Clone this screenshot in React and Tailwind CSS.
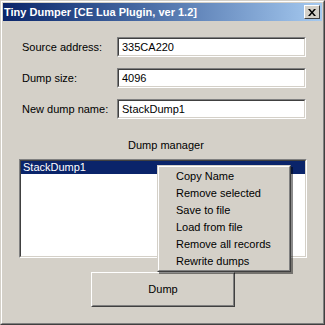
import React from 'react';

const font = { fontFamily: '"Liberation Sans", Arial, sans-serif' };

const Field = ({ label, value }) => (
  <div className="flex items-center h-5">
    <div className="w-[114px] pl-[19px] text-[11px] text-black whitespace-nowrap">{label}</div>
    <div className="w-[189px] h-5 bg-white border-t border-l border-[#808080] border-b border-r border-b-white border-r-white">
      <div className="h-full border-t border-l border-[#404040] border-b border-r border-b-[#d4d0c8] border-r-[#d4d0c8] pl-[3px] text-[11px] leading-[16px] text-black">
        {value}
      </div>
    </div>
  </div>
);

const menuItems = [
  'Copy Name',
  'Remove selected',
  'Save to file',
  'Load from file',
  'Remove all records',
  'Rewrite dumps',
];

export default function App() {
  return (
    <div className="w-[325px] h-[325px] bg-[#d4d0c8]" style={font}>
      <div className="w-[325px] h-[325px] border border-t-[#d4d0c8] border-l-[#d4d0c8] border-b-[#404040] border-r-[#404040]">
        <div className="h-full border border-t-white border-l-white border-b-[#808080] border-r-[#808080] p-px flex flex-col">
          {/* title bar */}
          <div className="h-[18px] flex items-center justify-between bg-gradient-to-r from-[#0a246a] to-[#a6caf0] pl-[1px] pr-[2px]">
            <span className="text-white font-bold text-[11px]">Tiny Dumper [CE Lua Plugin, ver 1.2]</span>
            <div className="w-4 h-[14px] bg-[#d4d0c8] border border-t-white border-l-white border-b-[#404040] border-r-[#404040] flex items-center justify-center">
              <svg width="8" height="7" viewBox="0 0 8 7">
                <path d="M0 0h2l2 2.5L6 0h2L5 3.5 8 7H6L4 4.5 2 7H0l3-3.5z" fill="black" />
              </svg>
            </div>
          </div>

          {/* body */}
          <div className="relative flex-1 flex flex-col pt-[16px]">
            <div className="flex flex-col gap-[11px]">
              <Field label="Source address:" value="335CA220" />
              <Field label="Dump size:" value="4096" />
              <Field label="New dump name:" value="StackDump1" />
            </div>

            <div className="mt-[20px] pl-[125px] text-[11px] text-black leading-[13px]">Dump manager</div>

            <div className="mt-[7px] ml-[16px] w-[288px] h-[99px] bg-white border border-t-[#808080] border-l-[#808080] border-b-white border-r-white">
              <div className="h-full border border-t-[#404040] border-l-[#404040] border-b-[#d4d0c8] border-r-[#d4d0c8]">
                <div className="h-[13px] bg-[#0a246a] text-white text-[11px] leading-[13px] pl-[2px]">StackDump1</div>
              </div>
            </div>

            <div className="mt-[14px] ml-[88px] w-[144px] h-[35px] border border-t-white border-l-white border-b-[#404040] border-r-[#404040]">
              <div className="h-full flex items-center justify-center border border-t-[#d4d0c8] border-l-[#d4d0c8] border-b-[#808080] border-r-[#808080] text-[11px] text-black">
                Dump
              </div>
            </div>

            {/* context menu */}
            <div className="absolute left-[154px] top-[144px] w-[134px] h-[107px] bg-[#d4d0c8] border border-t-[#d4d0c8] border-l-[#d4d0c8] border-b-[#404040] border-r-[#404040] shadow-[2px_2px_0_rgba(0,0,0,0.45)]">
              <div className="h-full border border-t-white border-l-white border-b-[#808080] border-r-[#808080] pt-[1px]">
                {menuItems.map((item) => (
                  <div key={item} className="h-[17px] pl-[17px] text-[11px] leading-[17px] text-black">
                    {item}
                  </div>
                ))}
              </div>
            </div>
          </div>
        </div>
      </div>
    </div>
  );
}
